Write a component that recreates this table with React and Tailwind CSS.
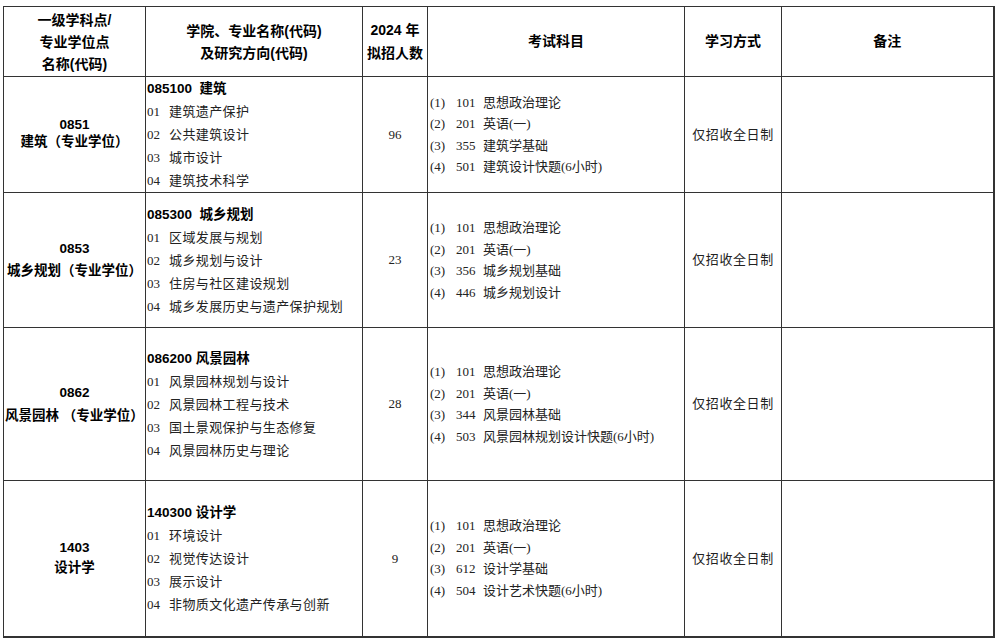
import React from "react";

const rows = [
  {
    code: "0851",
    name: "建筑（专业学位）",
    major: "085100  建筑",
    dirs: ["建筑遗产保护", "公共建筑设计", "城市设计", "建筑技术科学"],
    count: "96",
    exams: [
      ["101", "思想政治理论"],
      ["201", "英语(一)"],
      ["355", "建筑学基础"],
      ["501", "建筑设计快题(6小时)"],
    ],
    h: "h-[116px]",
    lead: "leading-[17px] pb-[4px]",
  },
  {
    code: "0853",
    name: "城乡规划（专业学位）",
    major: "085300  城乡规划",
    dirs: ["区域发展与规划", "城乡规划与设计", "住房与社区建设规划", "城乡发展历史与遗产保护规划"],
    count: "23",
    exams: [
      ["101", "思想政治理论"],
      ["201", "英语(一)"],
      ["356", "城乡规划基础"],
      ["446", "城乡规划设计"],
    ],
    h: "h-[135px]",
    lead: "leading-[22px]",
  },
  {
    code: "0862",
    name: "风景园林 （专业学位）",
    major: "086200 风景园林",
    dirs: ["风景园林规划与设计", "风景园林工程与技术", "国土景观保护与生态修复", "风景园林历史与理论"],
    count: "28",
    exams: [
      ["101", "思想政治理论"],
      ["201", "英语(一)"],
      ["344", "风景园林基础"],
      ["503", "风景园林规划设计快题(6小时)"],
    ],
    h: "h-[153px]",
    lead: "leading-[23px]",
  },
  {
    code: "1403",
    name: "设计学",
    major: "140300 设计学",
    dirs: ["环境设计", "视觉传达设计", "展示设计", "非物质文化遗产传承与创新"],
    count: "9",
    exams: [
      ["101", "思想政治理论"],
      ["201", "英语(一)"],
      ["612", "设计学基础"],
      ["504", "设计艺术快题(6小时)"],
    ],
    h: "h-[156px]",
    lead: "leading-[20px]",
  },
];

const sans = "font-['Liberation_Sans','Noto_Sans_CJK_SC',sans-serif]";
const serif = "font-['Liberation_Serif','Noto_Sans_CJK_SC',serif]";
const cell = "border border-[#333] align-middle p-0";

export default function App() {
  return (
    <div className="bg-white w-[995px] h-[640px] pl-[3px] pt-[6px]">
      <table className="table-fixed border-collapse w-[990px] text-[#222]">
        <colgroup>
          <col className="w-[142px]" />
          <col className="w-[217px]" />
          <col className="w-[65px]" />
          <col className="w-[257px]" />
          <col className="w-[97px]" />
          <col className="w-[212px]" />
        </colgroup>
        <thead>
          <tr className={`h-[70px] ${sans} font-bold text-[14px] text-black`}>
            <th className={`${cell} leading-[22px]`}>
              一级学科点/
              <br />
              专业学位点
              <br />
              名称(代码)
            </th>
            <th className={`${cell} leading-[22px]`}>
              学院、专业名称(代码)
              <br />
              及研究方向(代码)
            </th>
            <th className={`${cell} leading-[23px]`}>
              2024 年
              <br />
              拟招人数
            </th>
            <th className={cell}>考试科目</th>
            <th className={cell}>学习方式</th>
            <th className={`${cell} border-r-2`}>备注</th>
          </tr>
        </thead>
        <tbody>
          {rows.map((r, i) => {
            const last = i === rows.length - 1;
            const b = last ? "border-b-2" : "";
            return (
              <tr key={r.code} className={r.h}>
                <td className={`${cell} ${b} ${sans} font-bold text-[13.5px] text-center text-black whitespace-pre`}>
                  <div className={r.lead}>
                    {r.code}
                    <br />
                    {r.name}
                  </div>
                </td>
                <td className={`${cell} ${b} pl-px text-[13px] leading-[23px]`}>
                  <div className={`${sans} font-bold text-[13.5px] text-black whitespace-pre`}>{r.major}</div>
                  {r.dirs.map((d, j) => (
                    <div key={d} className={`${serif} tracking-[0.4px] whitespace-nowrap`}>
                      <span className="inline-block w-[22px] tracking-normal">0{j + 1}</span>
                      {d}
                    </div>
                  ))}
                </td>
                <td className={`${cell} ${b} ${serif} text-center text-[13px]`}>{r.count}</td>
                <td className={`${cell} ${b} pl-[2px] ${serif} text-[13px] leading-[21.5px]`}>
                  {r.exams.map(([c, t], j) => (
                    <div key={c + j} className="whitespace-nowrap">
                      <span className="inline-block w-[26px]">({j + 1})</span>
                      <span className="inline-block w-[27px]">{c}</span>
                      {t}
                    </div>
                  ))}
                </td>
                <td className={`${cell} ${b} ${serif} text-center text-[13px] tracking-[0.6px]`}>仅招收全日制</td>
                <td className={`${cell} ${b} border-r-2`}></td>
              </tr>
            );
          })}
        </tbody>
      </table>
    </div>
  );
}
